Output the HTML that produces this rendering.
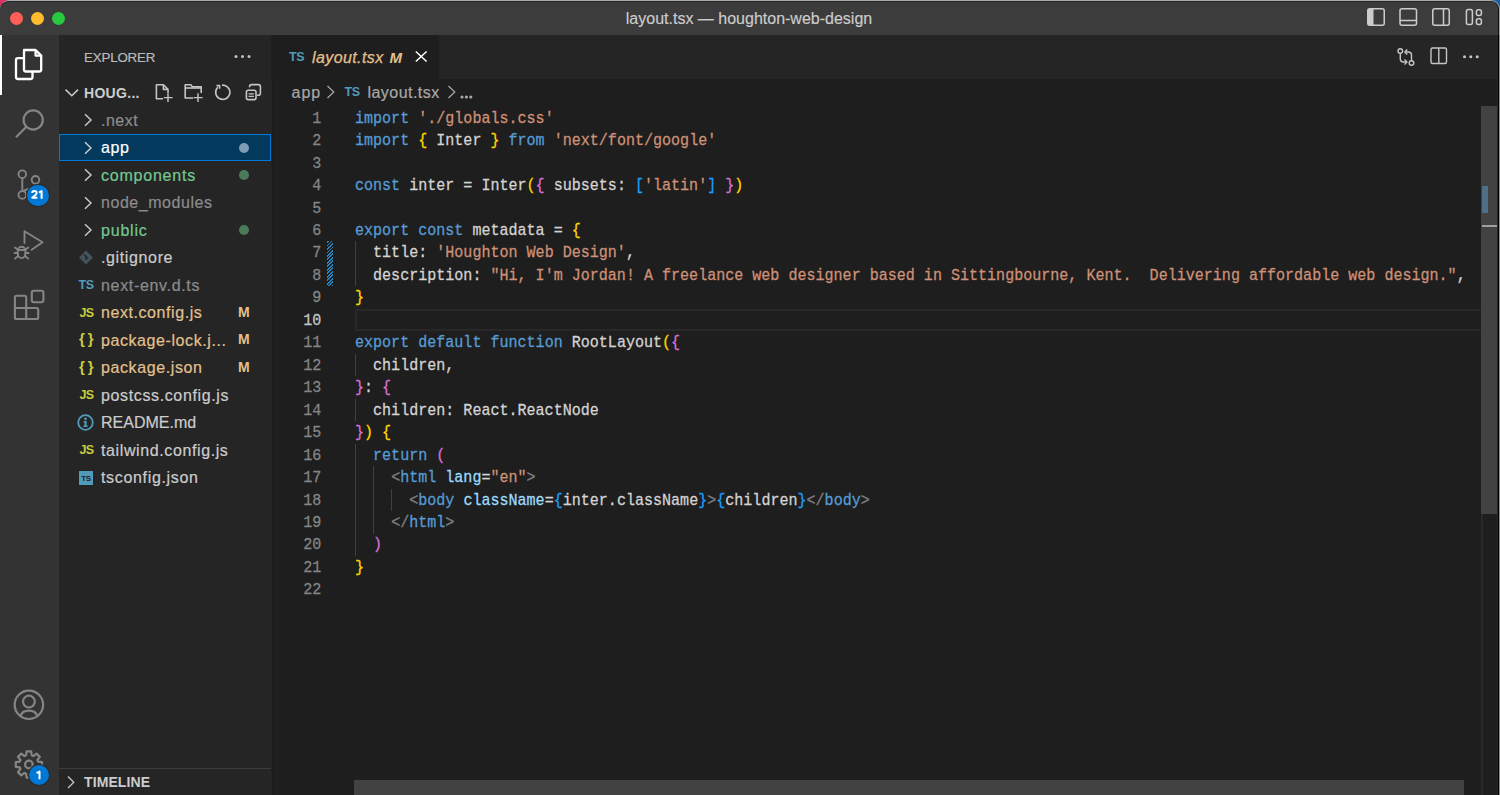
<!DOCTYPE html>
<html><head><meta charset="utf-8">
<style>
*{margin:0;padding:0;box-sizing:border-box}
html,body{width:1500px;height:795px;overflow:hidden;background:#1e1e1e}
body{position:relative;font-family:"Liberation Sans",sans-serif;}
.a{position:absolute;white-space:pre}
.mono{font-family:"Liberation Mono",monospace;font-size:15.065px;line-height:22.5px;height:22.5px;transform:scaleY(1.12);transform-origin:0 15.5px;-webkit-text-stroke:0.25px currentColor}
.ln{color:#858585;text-align:right;width:60px;left:261.2px}
.cl{left:355px;color:#d4d4d4}
.k{color:#569cd6}.s{color:#ce9178}.v{color:#9cdcfe}.w{color:#d4d4d4}
.y{color:#ffd700}.p{color:#da70d6}.b{color:#179fff}.g{color:#808080}
.row{font-size:16px;line-height:27.5px;height:27.5px;-webkit-text-stroke:0.2px currentColor}
.ic{font-size:12.5px;font-weight:bold;line-height:28.5px;letter-spacing:-0.5px}
.ic2{font-size:15px;font-weight:bold;line-height:26px;letter-spacing:-0.6px}
.mark{font-size:14px;font-weight:bold;line-height:27.5px;color:#e2c08d}
.ig{position:absolute;width:1px;background:#404040}
</style></head><body>
<!-- title bar -->
<div class="a" style="left:0;top:0;width:12px;height:12px;background:#dd2f62"></div>
<div class="a" style="left:1488px;top:0;width:12px;height:12px;background:#1763ac"></div>
<div class="a" style="left:0;top:0;width:1500px;height:35px;background:#3c3c3c;border-radius:9px 9px 0 0;border-top:1px solid #a9a9a9;border-right:1px solid #a0a0a0;box-shadow:inset 0 1px 0 #262626, inset -1px 0 0 #111"></div>
<div class="a" style="left:10px;top:12px;width:13px;height:13px;border-radius:50%;background:#fe5f57"></div>
<div class="a" style="left:31px;top:12px;width:13px;height:13px;border-radius:50%;background:#febc2e"></div>
<div class="a" style="left:51.5px;top:12px;width:13px;height:13px;border-radius:50%;background:#28c840"></div>
<div class="a" style="left:-1px;top:8.5px;width:1500px;text-align:center;font-size:16px;line-height:19px;color:#cccccc;-webkit-text-stroke:0.15px currentColor">layout.tsx — houghton-web-design</div>
<svg class="a" style="left:1360px;top:0" width="140" height="35" viewBox="0 0 140 35">
 <g fill="none" stroke="#cccccc" stroke-width="1.5">
  <rect x="7.75" y="8.75" width="16.5" height="16.5" rx="2"/>
  <rect x="40" y="8.75" width="16.5" height="16.5" rx="2"/><path d="M40 20.5 H56.5"/>
  <rect x="72.75" y="8.75" width="16.5" height="16.5" rx="2"/><path d="M83.5 8.75 V25.25"/>
  <rect x="106.4" y="9.6" width="6" height="15" rx="2"/>
  <rect x="116.4" y="9.8" width="5" height="5.6" rx="2"/><rect x="116.4" y="18.8" width="5" height="5.6" rx="2"/>
 </g>
 <rect x="8" y="9" width="5.5" height="16" fill="#cccccc"/>
</svg>

<!-- activity bar -->
<div class="a" style="left:0;top:35px;width:59px;height:760px;background:#333333"></div>
<div class="a" style="left:0;top:35px;width:2px;height:60px;background:#ffffff"></div>
<svg class="a" style="left:0;top:35px" width="59" height="300" viewBox="0 35 59 300">
 <!-- explorer -->
 <g fill="none" stroke="#ffffff" stroke-width="2.3" stroke-linejoin="round">
  <path d="M24 50 H35.6 L41.2 55.6 V69.5 A2 2 0 0 1 39.2 71.5 H26 A2 2 0 0 1 24 69.5 V52 A2 2 0 0 1 26 50 Z"/>
  <path d="M35.6 50.2 V55.6 H41"/>
  <path d="M24 58.2 H18 A2 2 0 0 0 16 60.2 V77 A2 2 0 0 0 18 79 H30.5 A2 2 0 0 0 32.5 77 V71.5"/>
 </g>
 <!-- search -->
 <g fill="none" stroke="#858585" stroke-width="2.2">
  <circle cx="33.2" cy="120" r="9.6"/>
  <path d="M26.4 126.8 L16 137.2"/>
 </g>
 <!-- source control -->
 <g fill="none" stroke="#858585" stroke-width="1.9">
  <circle cx="22.3" cy="174.2" r="3.8"/>
  <circle cx="35.5" cy="179.8" r="3.8"/>
  <circle cx="22.3" cy="194.9" r="3.8"/>
  <path d="M22.3 178 V191.1"/>
  <path d="M35.5 183.6 C35.5 188.5 29 187.5 22.6 191.5"/>
 </g>
 <!-- run debug -->
 <g fill="none" stroke="#858585" stroke-width="1.9" stroke-linejoin="round" stroke-linecap="round">
  <path d="M24.5 243 V231.2 L42.6 242.3 L31.6 249.8"/>
  <path d="M17.8 250.5 A3.8 3.8 0 0 1 25.4 250.5 V253.5 A3.8 4.6 0 0 1 17.8 253.5 Z"/>
  <path d="M17.8 250 H25.4"/>
  <path d="M15 247.5 L17.6 249.6 M28.2 247.5 L25.6 249.6 M14.6 253 H17.6 M25.6 253 H28.6 M15 258.6 L17.8 256.2 M28.2 258.6 L25.4 256.2"/>
 </g>
 <!-- extensions -->
 <g fill="none" stroke="#858585" stroke-width="2.1" stroke-linejoin="round">
  <path d="M16.5 295.8 H24.6 A1.6 1.6 0 0 1 26.2 297.4 V308 H36.6 A1.6 1.6 0 0 1 38.2 309.6 V317.4 A1.6 1.6 0 0 1 36.6 319 H16.5 A1.6 1.6 0 0 1 14.9 317.4 V297.4 A1.6 1.6 0 0 1 16.5 295.8 Z"/>
  <path d="M14.9 308 H26.2 V319"/>
  <rect x="31.8" y="290.7" width="11.6" height="11.6" rx="2"/>
 </g>
</svg>
<!-- badge 21 -->
<div class="a" style="left:26.5px;top:184.5px;width:22px;height:21px;border-radius:11px;background:#0078d4;box-shadow:0 0 0 1px #2a2a2a"></div>
<svg class="a" style="left:26px;top:184px" width="23" height="22" viewBox="26 184 23 22"><g fill="none" stroke="#ffffff" stroke-width="2" stroke-linejoin="round"><path d="M32.2 193.1 C32.2 191.8 33.1 190.9 34.4 190.9 C35.7 190.9 36.6 191.8 36.6 192.9 C36.6 194 35.9 194.7 34.9 195.5 L32.2 197.7 H37.4"/><path d="M38.9 192.6 L41.6 191 V198.7"/></g></svg>
<svg class="a" style="left:0;top:680px" width="59" height="115" viewBox="0 680 59 115">
 <g fill="none" stroke="#858585" stroke-width="2.2">
  <circle cx="28.9" cy="704.8" r="14.2"/>
  <circle cx="28.9" cy="701.6" r="5.9"/>
  <path d="M20.6 716.2 C22.2 708.8 35.6 708.8 37.2 716.2"/>
 </g>
 <g fill="none" stroke="#858585" stroke-width="2.2" stroke-linejoin="round">
  <path d="M26.09 755.32 L26.59 751.40 L31.21 751.40 L31.71 755.32 L33.41 756.02 L36.53 753.61 L39.79 756.87 L37.38 759.99 L38.08 761.69 L42.00 762.19 L42.00 766.81 L38.08 767.31 L37.38 769.01 L39.79 772.13 L36.53 775.39 L33.41 772.98 L31.71 773.68 L31.21 777.60 L26.59 777.60 L26.09 773.68 L24.39 772.98 L21.27 775.39 L18.01 772.13 L20.42 769.01 L19.72 767.31 L15.80 766.81 L15.80 762.19 L19.72 761.69 L20.42 759.99 L18.01 756.87 L21.27 753.61 L24.39 756.02 Z"/>
  <circle cx="28.9" cy="764.5" r="3.8"/>
 </g>
</svg>
<div class="a" style="left:29px;top:765px;width:20px;height:20px;border-radius:10px;background:#0078d4;box-shadow:0 0 0 1px #2a2a2a"></div>
<svg class="a" style="left:29px;top:765px" width="20" height="20" viewBox="29 765 20 20"><path d="M36.6 773.2 L39.5 771.5 V779.3" fill="none" stroke="#ffffff" stroke-width="2" stroke-linejoin="round"/></svg>

<!-- sidebar -->
<div class="a" style="left:59px;top:35px;width:212px;height:760px;background:#252526"></div>
<div class="a" style="left:84px;top:47.5px;font-size:13.3px;line-height:19px;color:#bbbbbb;letter-spacing:-0.15px;-webkit-text-stroke:0.2px currentColor">EXPLORER</div>
<svg class="a" style="left:230px;top:50px" width="24" height="14"><circle cx="6" cy="6.5" r="1.5" fill="#c5c5c5"/><circle cx="12.5" cy="6.5" r="1.5" fill="#c5c5c5"/><circle cx="19" cy="6.5" r="1.5" fill="#c5c5c5"/></svg>
<svg class="a" style="left:62px;top:84.5px" width="20" height="16" viewBox="0 0 20 16"><path d="M3.6 4.6 L9.8 10.8 L16 4.6" fill="none" stroke="#cccccc" stroke-width="1.5"/></svg>
<div class="a" style="left:84px;top:83.5px;font-size:14px;font-weight:bold;line-height:19px;color:#cccccc;letter-spacing:0.3px">HOUG...</div>
<svg class="a" style="left:150px;top:80px" width="120" height="26" viewBox="150 80 120 26">
 <g fill="none" stroke="#c5c5c5" stroke-width="1.6" stroke-linejoin="round">
  <path d="M163 98.8 H156.4 V84.8 H163.4 L168 89.4 V93"/><path d="M163.4 84.8 V89.4 H168"/>
  <path d="M168 93.2 V102 M163.8 97.6 H172.6" stroke-width="1.4"/>
  <path d="M193.2 98 H185.2 V84.8 H190.8 L192.3 86.8 H201.2 V93"/><path d="M185.2 88 H201.2"/>
  <path d="M198 93.2 V102 M193.8 97.6 H202.6" stroke-width="1.4"/>
  <path d="M217.8 87.2 A7.1 7.1 0 1 0 222 85.2"/><path d="M216.5 85.6 H219.6 V88.8"/>
  <rect x="246.4" y="90.2" width="9.6" height="9.4" rx="1.8"/><path d="M249.6 87.2 V86.6 A2 2 0 0 1 251.6 84.6 H258.4 A2 2 0 0 1 260.4 86.6 V93.2 A2 2 0 0 1 258.4 95.2 H257"/>
  <path d="M248.6 93.8 H253.8 M248.6 96.4 H253.8" stroke-width="1.3"/>
 </g>
</svg>
<div class="a" style="left:59px;top:133.5px;width:212px;height:27.8px;background:#04395e;border:1.5px solid #0078d4"></div>
<svg class="a" style="left:82px;top:112.0px" width="12" height="16" viewBox="0 0 12 16"><path d="M3 2.2 L9 8 L3 13.8" fill="none" stroke="#cccccc" stroke-width="1.45"/></svg>
<div class="a row" style="left:101px;top:106.75px;color:#8c8c8c;letter-spacing:0.5px">.next</div>
<svg class="a" style="left:82px;top:139.5px" width="12" height="16" viewBox="0 0 12 16"><path d="M3 2.2 L9 8 L3 13.8" fill="none" stroke="#cccccc" stroke-width="1.45"/></svg>
<div class="a row" style="left:101px;top:134.25px;color:#ffffff;letter-spacing:0.65px">app</div>
<div class="a" style="left:239px;top:142.5px;width:10px;height:10px;border-radius:50%;background:#7f9cb5"></div>
<svg class="a" style="left:82px;top:167.0px" width="12" height="16" viewBox="0 0 12 16"><path d="M3 2.2 L9 8 L3 13.8" fill="none" stroke="#cccccc" stroke-width="1.45"/></svg>
<div class="a row" style="left:101px;top:161.75px;color:#73c991;letter-spacing:0.78px">components</div>
<div class="a" style="left:239px;top:170.0px;width:10px;height:10px;border-radius:50%;background:#4b7a59"></div>
<svg class="a" style="left:82px;top:194.5px" width="12" height="16" viewBox="0 0 12 16"><path d="M3 2.2 L9 8 L3 13.8" fill="none" stroke="#cccccc" stroke-width="1.45"/></svg>
<div class="a row" style="left:101px;top:189.25px;color:#8c8c8c;letter-spacing:0.55px">node_modules</div>
<svg class="a" style="left:82px;top:222.0px" width="12" height="16" viewBox="0 0 12 16"><path d="M3 2.2 L9 8 L3 13.8" fill="none" stroke="#cccccc" stroke-width="1.45"/></svg>
<div class="a row" style="left:101px;top:216.75px;color:#73c991;letter-spacing:0.8px">public</div>
<div class="a" style="left:239px;top:225.0px;width:10px;height:10px;border-radius:50%;background:#4b7a59"></div>
<svg class="a" style="left:78px;top:250.0px" width="16" height="15" viewBox="0 0 16 15"><path d="M8 0.5 L15 7.5 L8 14.5 L1 7.5 Z" fill="#41535b"/><path d="M6 4.5 L10 8.5 M8 6.5 L8 10" stroke="#252526" stroke-width="1.2"/></svg>
<div class="a row" style="left:101px;top:244.25px;color:#cccccc;letter-spacing:0.63px">.gitignore</div>
<div class="a ic" style="left:78.5px;top:271.25px;color:#519aba">TS</div>
<div class="a row" style="left:101px;top:271.75px;color:#8c8c8c;letter-spacing:0.67px">next-env.d.ts</div>
<div class="a ic" style="left:79px;top:298.75px;color:#cbcb41;letter-spacing:-0.7px;left:79.5px">JS</div>
<div class="a row" style="left:101px;top:299.25px;color:#e2c08d;letter-spacing:0.57px">next.config.js</div>
<div class="a mark" style="left:238px;top:298.75px">M</div>
<div class="a ic2" style="left:79px;top:326.25px;color:#cbcb41">{ }</div>
<div class="a row" style="left:101px;top:326.75px;color:#e2c08d;letter-spacing:0.58px">package-lock.j...</div>
<div class="a mark" style="left:238px;top:326.25px">M</div>
<div class="a ic2" style="left:79px;top:353.75px;color:#cbcb41">{ }</div>
<div class="a row" style="left:101px;top:354.25px;color:#e2c08d;letter-spacing:0.6px">package.json</div>
<div class="a mark" style="left:238px;top:353.75px">M</div>
<div class="a ic" style="left:79px;top:381.25px;color:#cbcb41;letter-spacing:-0.7px;left:79.5px">JS</div>
<div class="a row" style="left:101px;top:381.75px;color:#cccccc;letter-spacing:0.63px">postcss.config.js</div>
<svg class="a" style="left:77px;top:414.0px" width="17" height="17" viewBox="0 0 17 17"><circle cx="8.5" cy="8.5" r="7.3" fill="none" stroke="#519aba" stroke-width="1.8"/><circle cx="8.5" cy="4.8" r="1.35" fill="#519aba"/><path d="M6.6 7 H9.6 V11.6 H10.6 V13 H6.4 V11.6 H7.5 V8.4 H6.6 Z" fill="#519aba"/></svg>
<div class="a row" style="left:101px;top:409.25px;color:#cccccc;letter-spacing:0.0px">README.md</div>
<div class="a ic" style="left:79px;top:436.25px;color:#cbcb41;letter-spacing:-0.7px;left:79.5px">JS</div>
<div class="a row" style="left:101px;top:436.75px;color:#cccccc;letter-spacing:0.61px">tailwind.config.js</div>
<div class="a" style="left:79px;top:470.5px;width:14px;height:14px;background:#519aba;color:#252526;font:bold 8px/15px 'Liberation Sans',sans-serif;text-align:center;letter-spacing:-0.3px">TS</div>
<div class="a row" style="left:101px;top:464.25px;color:#cccccc;letter-spacing:0.67px">tsconfig.json</div>
<div class="a" style="left:59px;top:768px;width:212px;height:1px;background:#3c3c3c"></div>
<svg class="a" style="left:62px;top:774px" width="20" height="16" viewBox="0 0 20 16"><path d="M6 2.5 L11.8 8.2 L6 14" fill="none" stroke="#c5c5c5" stroke-width="1.3"/></svg>
<div class="a" style="left:84px;top:773px;font-size:14px;font-weight:bold;line-height:19px;color:#cccccc;letter-spacing:0.1px">TIMELINE</div>

<div class="a" style="left:271px;top:79px;width:1px;height:716px;background:#232323"></div>
<div class="a" style="left:272px;top:79px;width:1px;height:716px;background:#1b1b1b"></div>
<!-- editor tabs -->
<div class="a" style="left:271px;top:35px;width:1229px;height:44px;background:#252526"></div>
<div class="a" style="left:271px;top:35px;width:168px;height:44px;background:#1e1e1e"></div>
<div class="a" style="left:289px;top:47.5px;font-size:12.5px;font-weight:bold;line-height:19px;color:#519aba;letter-spacing:-0.3px">TS</div>
<div class="a" style="left:312px;top:47.5px;font-size:16px;font-style:italic;line-height:19px;color:#e2c08d;letter-spacing:0.4px;-webkit-text-stroke:0.25px currentColor">layout.tsx</div>
<div class="a" style="left:389.5px;top:47.5px;font-size:15px;font-style:italic;font-weight:bold;line-height:19px;color:#e2c08d">M</div>
<svg class="a" style="left:413px;top:49px" width="16" height="15" viewBox="0 0 16 15"><path d="M2.8 2.5 L13.6 12.5 M13.6 2.5 L2.8 12.5" stroke="#ffffff" stroke-width="1.5"/></svg>
<svg class="a" style="left:1390px;top:40px" width="100" height="34" viewBox="1390 40 100 34">
 <g fill="none" stroke="#c5c5c5" stroke-width="1.4" stroke-linejoin="round">
  <circle cx="1400.3" cy="51" r="2.3"/><circle cx="1411.5" cy="63" r="2.3"/>
  <path d="M1400.3 53.3 V59 C1400.3 61 1401.5 62 1403.5 62 H1407"/><path d="M1404.5 59.5 L1407 62 L1404.5 64.5"/>
  <path d="M1411.5 60.7 V55 C1411.5 53 1410.3 52 1408.3 52 H1405"/><path d="M1407.3 49.5 L1404.8 52 L1407.3 54.5"/>
  <rect x="1431" y="48" width="15.5" height="15.5" rx="1.5"/><path d="M1438.8 48 V63.5"/>
 </g>
 <circle cx="1464.5" cy="56.7" r="1.5" fill="#c5c5c5"/><circle cx="1470.8" cy="56.7" r="1.5" fill="#c5c5c5"/><circle cx="1477.2" cy="56.7" r="1.5" fill="#c5c5c5"/>
</svg>

<!-- breadcrumbs -->
<div class="a" style="left:291.5px;top:83px;font-size:16px;line-height:19px;color:#a9a9a9;letter-spacing:1px;-webkit-text-stroke:0.2px currentColor">app</div>
<svg class="a" style="left:324px;top:84px" width="14" height="16" viewBox="0 0 14 16"><path d="M3.5 2 L9.8 8 L3.5 14" fill="none" stroke="#a9a9a9" stroke-width="1.2"/></svg>
<div class="a" style="left:344.5px;top:83px;font-size:12.5px;font-weight:bold;line-height:19px;color:#519aba;letter-spacing:-0.3px">TS</div>
<div class="a" style="left:367.5px;top:83px;font-size:16px;line-height:19px;color:#a9a9a9;letter-spacing:0.45px;-webkit-text-stroke:0.2px currentColor">layout.tsx</div>
<svg class="a" style="left:444.5px;top:84px" width="14" height="16" viewBox="0 0 14 16"><path d="M3.5 2 L9.8 8 L3.5 14" fill="none" stroke="#a9a9a9" stroke-width="1.2"/></svg>
<svg class="a" style="left:458px;top:90px" width="20" height="12"><circle cx="4" cy="7" r="1.6" fill="#a9a9a9"/><circle cx="8.4" cy="7" r="1.6" fill="#a9a9a9"/><circle cx="12.8" cy="7" r="1.6" fill="#a9a9a9"/></svg>

<!-- current line -->
<div class="a" style="left:354.5px;top:308.75px;width:1127px;height:22.5px;border:2px solid #282828;border-right:none"></div>
<!-- diff decoration -->
<div class="a" style="left:326.5px;top:241.25px;width:6px;height:45px;background:repeating-linear-gradient(-45deg,#2585c0 0 1.3px,transparent 1.3px 2.45px)"></div>
<!-- indent guides -->
<div class="ig" style="left:355px;top:241.25px;height:45px"></div>
<div class="ig" style="left:355px;top:353.75px;height:22.5px"></div>
<div class="ig" style="left:355px;top:398.75px;height:22.5px"></div>
<div class="ig" style="left:355px;top:443.75px;height:112.5px"></div>
<div class="ig" style="left:373px;top:466.25px;height:67.5px"></div>
<div class="ig" style="left:391px;top:488.75px;height:22.5px"></div>

<div class="a mono ln" style="top:107.70px">1</div>
<div class="a mono ln" style="top:130.16px">2</div>
<div class="a mono ln" style="top:152.62px">3</div>
<div class="a mono ln" style="top:175.08px">4</div>
<div class="a mono ln" style="top:197.54px">5</div>
<div class="a mono ln" style="top:220.00px">6</div>
<div class="a mono ln" style="top:242.46px">7</div>
<div class="a mono ln" style="top:264.92px">8</div>
<div class="a mono ln" style="top:287.38px">9</div>
<div class="a mono ln" style="top:309.84px;color:#c6c6c6">10</div>
<div class="a mono ln" style="top:332.30px">11</div>
<div class="a mono ln" style="top:354.76px">12</div>
<div class="a mono ln" style="top:377.22px">13</div>
<div class="a mono ln" style="top:399.68px">14</div>
<div class="a mono ln" style="top:422.14px">15</div>
<div class="a mono ln" style="top:444.60px">16</div>
<div class="a mono ln" style="top:467.06px">17</div>
<div class="a mono ln" style="top:489.52px">18</div>
<div class="a mono ln" style="top:511.98px">19</div>
<div class="a mono ln" style="top:534.44px">20</div>
<div class="a mono ln" style="top:556.90px">21</div>
<div class="a mono ln" style="top:579.36px">22</div>
<div class="a mono cl" style="top:107.70px"><span class="k">import</span><span class="w"> </span><span class="s">'./globals.css'</span></div>
<div class="a mono cl" style="top:130.16px"><span class="k">import</span><span class="w"> </span><span class="y">{</span><span class="w"> Inter </span><span class="y">}</span><span class="w"> </span><span class="k">from</span><span class="w"> </span><span class="s">'next/font/google'</span></div>
<div class="a mono cl" style="top:152.62px"></div>
<div class="a mono cl" style="top:175.08px"><span class="k">const</span><span class="w"> inter = Inter</span><span class="y">(</span><span class="p">{</span><span class="w"> subsets: </span><span class="b">[</span><span class="s">'latin'</span><span class="b">]</span><span class="w"> </span><span class="p">}</span><span class="y">)</span></div>
<div class="a mono cl" style="top:197.54px"></div>
<div class="a mono cl" style="top:220.00px"><span class="k">export</span><span class="w"> </span><span class="k">const</span><span class="w"> metadata = </span><span class="y">{</span></div>
<div class="a mono cl" style="top:242.46px"><span class="w">  title: </span><span class="s">'Houghton Web Design'</span><span class="w">,</span></div>
<div class="a mono cl" style="top:264.92px"><span class="w">  description: </span><span class="s">"Hi, I'm Jordan! A freelance web designer based in Sittingbourne, Kent.  Delivering affordable web design."</span><span class="w">,</span></div>
<div class="a mono cl" style="top:287.38px"><span class="y">}</span></div>
<div class="a mono cl" style="top:309.84px"></div>
<div class="a mono cl" style="top:332.30px"><span class="k">export</span><span class="w"> </span><span class="k">default</span><span class="w"> </span><span class="k">function</span><span class="w"> RootLayout</span><span class="y">(</span><span class="p">{</span></div>
<div class="a mono cl" style="top:354.76px"><span class="w">  children,</span></div>
<div class="a mono cl" style="top:377.22px"><span class="p">}</span><span class="w">: </span><span class="p">{</span></div>
<div class="a mono cl" style="top:399.68px"><span class="w">  children: React.ReactNode</span></div>
<div class="a mono cl" style="top:422.14px"><span class="p">}</span><span class="y">)</span><span class="w"> </span><span class="y">{</span></div>
<div class="a mono cl" style="top:444.60px"><span class="w">  </span><span class="k">return</span><span class="w"> </span><span class="p">(</span></div>
<div class="a mono cl" style="top:467.06px"><span class="w">    </span><span class="g">&lt;</span><span class="k">html</span><span class="w"> </span><span class="v">lang</span><span class="w">=</span><span class="s">"en"</span><span class="g">&gt;</span></div>
<div class="a mono cl" style="top:489.52px"><span class="w">      </span><span class="g">&lt;</span><span class="k">body</span><span class="w"> </span><span class="v">className</span><span class="w">=</span><span class="b">{</span><span class="w">inter.className</span><span class="b">}</span><span class="g">&gt;</span><span class="b">{</span><span class="w">children</span><span class="b">}</span><span class="g">&lt;/</span><span class="k">body</span><span class="g">&gt;</span></div>
<div class="a mono cl" style="top:511.98px"><span class="w">    </span><span class="g">&lt;/</span><span class="k">html</span><span class="g">&gt;</span></div>
<div class="a mono cl" style="top:534.44px"><span class="w">  </span><span class="p">)</span></div>
<div class="a mono cl" style="top:556.90px"><span class="y">}</span></div>
<div class="a mono cl" style="top:579.36px"></div>

<!-- scrollbars -->
<div class="a" style="left:1481px;top:514px;width:2px;height:281px;background:#282828"></div>
<div class="a" style="left:1481px;top:106px;width:17px;height:408px;background:#424242"></div>
<div class="a" style="left:1482px;top:186px;width:6px;height:27px;background:#4e6f86"></div>
<div class="a" style="left:1482px;top:224.5px;width:16px;height:2.5px;background:#a0a0a0"></div>
<div class="a" style="left:354px;top:780px;width:1110px;height:15px;background:#424242"></div>
<div class="a" style="left:1497px;top:35px;width:1px;height:760px;background:#262626"></div>
<div class="a" style="left:1498px;top:35px;width:1px;height:760px;background:#000"></div>
<div class="a" style="left:1499px;top:35px;width:1px;height:760px;background:#8f8f8f"></div>
</body></html>
